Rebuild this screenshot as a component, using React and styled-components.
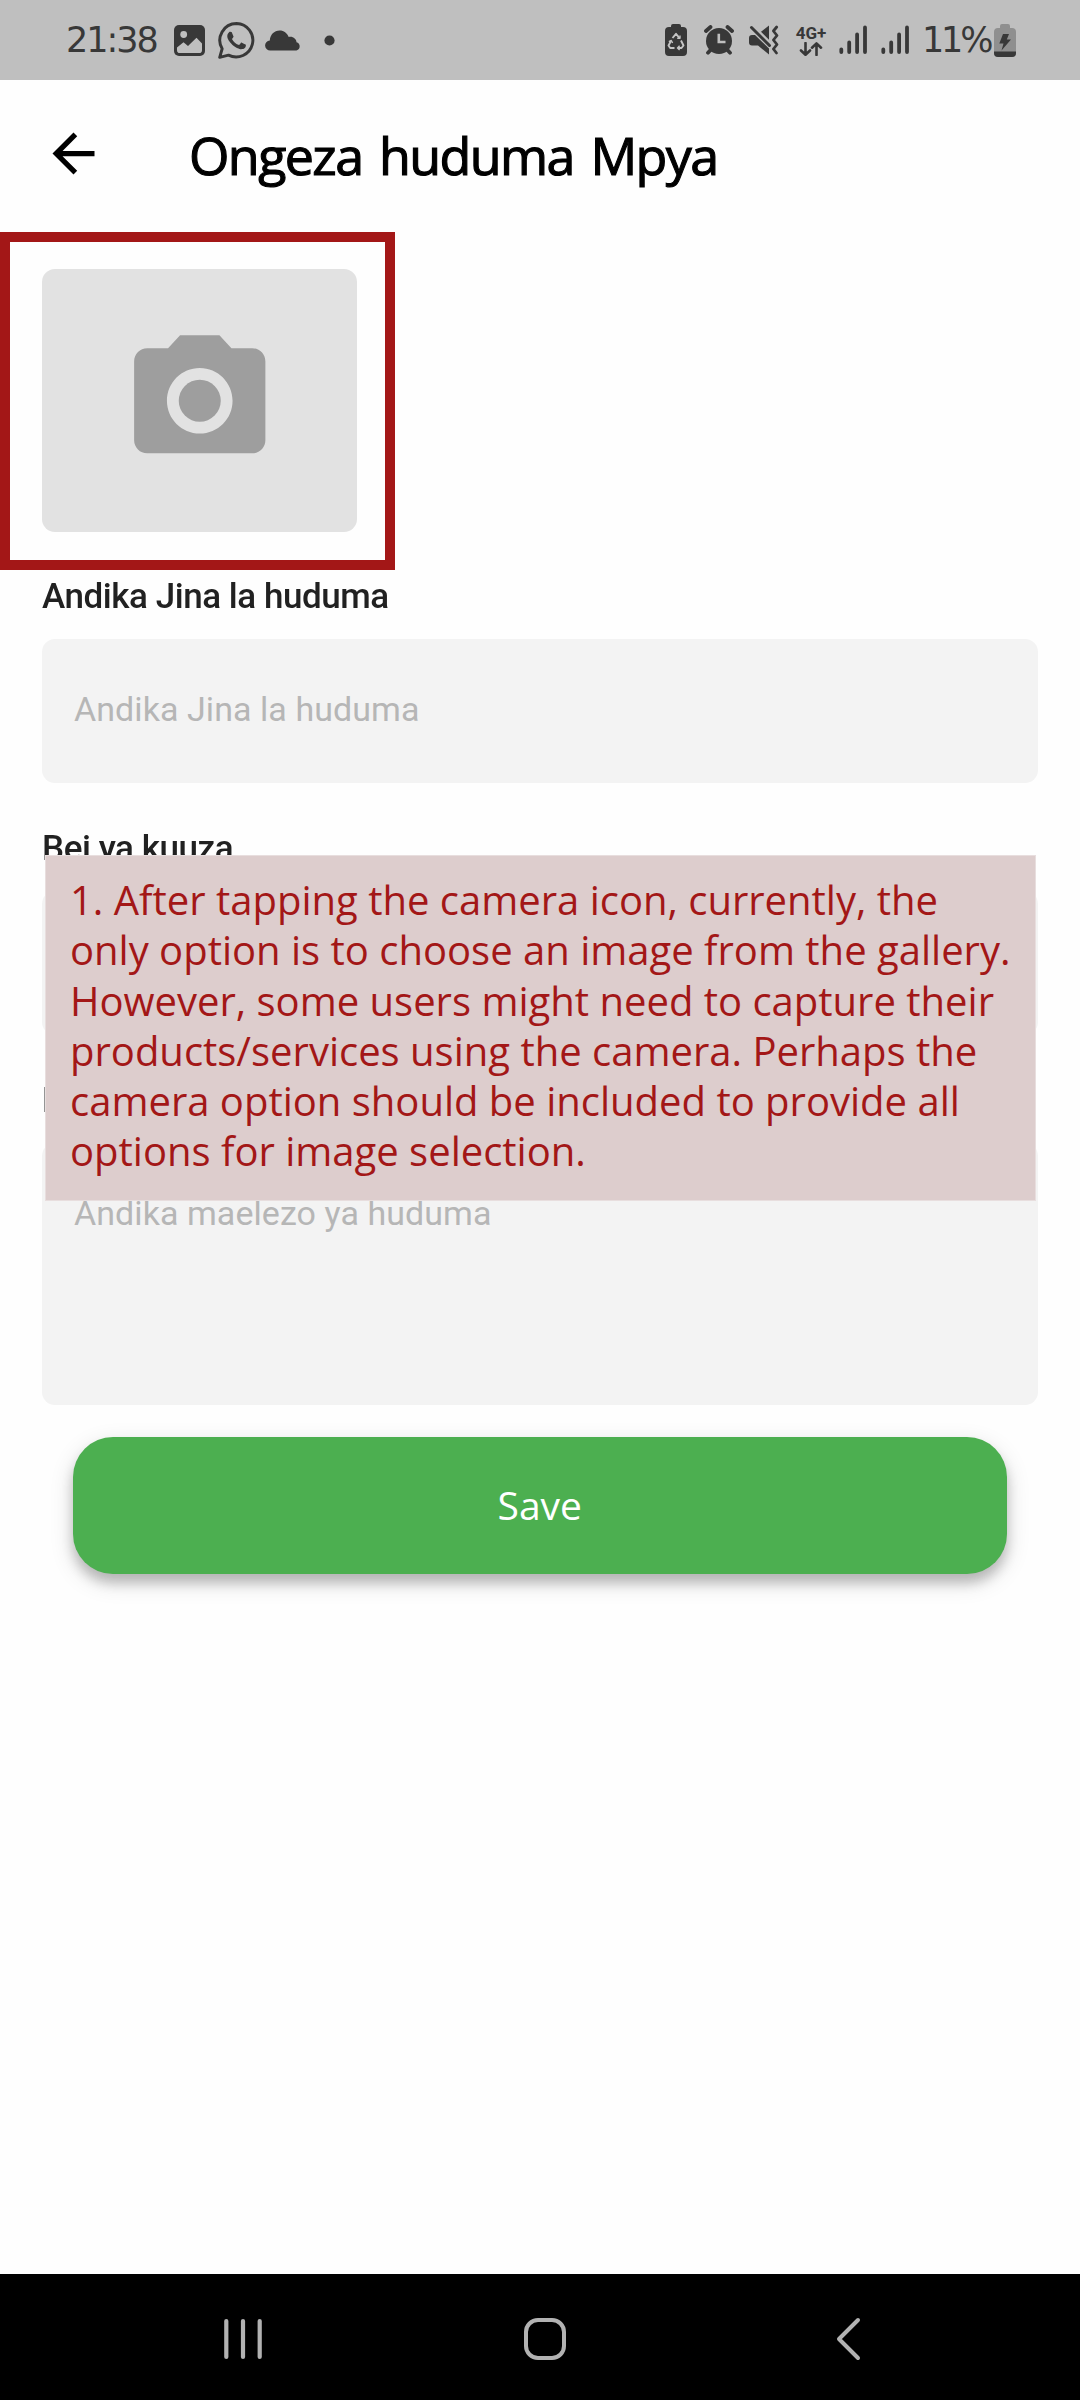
import React from "react";
import styled, { createGlobalStyle } from "styled-components";

const INK = "#383838";
const RED = "#a31717";

const GlobalStyle = createGlobalStyle`
  *, *::before, *::after { box-sizing: border-box; }
  html, body { margin: 0; padding: 0; background: #fefefe; }
  svg { display: block; flex: none; }
`;

const Screen = styled.div`
  position: relative;
  display: flex;
  flex-direction: column;
  width: 1080px;
  height: 2400px;
  overflow: hidden;
  background: #fefefe;
  font-family: Roboto, "Noto Sans", sans-serif;
`;

const StatusBar = styled.header`
  display: flex;
  justify-content: space-between;
  align-items: center;
  flex: none;
  height: 80px;
  padding: 0 64px 0 66px;
  background: #bfbfbf;
  color: ${INK};
`;

const StatusGroup = styled.div`
  display: flex;
  align-items: center;
  height: 80px;
`;

const StatusText = styled.span`
  display: block;
  width: ${(p) => p.$width}px;
  margin-right: ${(p) => p.$after}px;
  font-family: "DejaVu Sans", sans-serif;
  font-size: 35px;
  line-height: 80px;
  letter-spacing: ${(p) => p.$track}px;
  white-space: nowrap;
`;

const StatusIcon = styled.svg`
  margin-right: ${(p) => p.$after || 0}px;
`;

const Network = styled.div`
  display: flex;
  flex-direction: column;
  align-items: center;
  width: 32px;
  margin-right: 12px;
  font: 700 17px/17px Roboto, sans-serif;
  white-space: nowrap;
`;

const AppBar = styled.div`
  display: flex;
  align-items: center;
  flex: none;
  height: 147px;
  padding-left: 42px;
`;

const Title = styled.h1`
  margin: 0 0 0 84px;
  padding-top: 3px;
  font: 500 52px/70px "Open Sans", sans-serif;
  letter-spacing: -1.6px;
  word-spacing: 4.6px;
  color: #000;
  -webkit-text-stroke: 1.1px #000;
  white-space: nowrap;
`;

const Form = styled.main`
  display: flex;
  flex-direction: column;
  flex: 1;
  padding: 42px 42px 0;
`;

const PhotoSlot = styled.div`
  height: 262px;
`;

const PhotoButton = styled.div`
  display: flex;
  align-items: center;
  justify-content: center;
  width: 315px;
  height: 262.6px;
  border-radius: 13px;
  background: #e2e2e2;
`;

const Field = styled.div`
  display: flex;
  flex-direction: column;
  gap: 20px;
  padding-top: 42px;
`;

const Label = styled.div`
  font-size: 35px;
  font-weight: 500;
  line-height: 46px;
  letter-spacing: -0.45px;
  padding-top: 1px;
  margin-bottom: -1px;
  color: #212121;
  white-space: nowrap;
  will-change: opacity;
`;

const Input = styled.div`
  height: ${(p) => p.$height}px;
  padding: ${(p) => p.$padTop}px 32px 0;
  border-radius: 13px;
  background: #f3f3f3;
  font-size: 34px;
  line-height: 44px;
  letter-spacing: 0.06px;
  color: #b6b6b6;
  white-space: nowrap;
`;

const SaveButton = styled.div`
  display: flex;
  align-items: center;
  justify-content: center;
  height: 136.6px;
  margin: 32px 31.5px 0 31px;
  border-radius: 40px;
  background: #4caf50;
  box-shadow: 0 9px 12px rgba(0, 0, 0, 0.2), 0 8px 24px rgba(0, 0, 0, 0.14);
  color: #fff;
  font: 400 39px/50px "Open Sans", sans-serif;
`;

const Highlight = styled.div`
  position: absolute;
  left: 0;
  top: 232px;
  width: 395px;
  height: 338px;
  border: 10px solid ${RED};
`;

const Note = styled.div`
  position: absolute;
  left: 45px;
  top: 855px;
  width: 991px;
  height: 346px;
  padding: 19px 0 0 24px;
  border: 1px solid #e8dede;
  background: #ddcdcd;
  color: ${RED};
  font: 400 40px/50.25px "Open Sans", sans-serif;
`;

const NoteLine = styled.div`
  white-space: nowrap;
`;

const NavBar = styled.footer`
  display: flex;
  align-items: center;
  flex: none;
  height: 126px;
  padding: 4px 218px 0 222px;
  justify-content: space-between;
  background: #000;
`;

const HomeIcon = styled.svg`
  margin-right: 8px;
`;

const Signal = ({ after }) => (
  <StatusIcon width="28" height="30" $after={after} stroke={INK} strokeWidth="3.8" strokeLinecap="round">
    <path d="M2.3 24.5V27M10.2 17.5V27M18.1 9.5V27M26 2.5V27" />
  </StatusIcon>
);

const noteLines = [
  "1. After tapping the camera icon, currently, the",
  "only option is to choose an image from the gallery.",
  "However, some users might need to capture their",
  "products/services using the camera. Perhaps the",
  "camera option should be included to provide all",
  "options for image selection.",
];

export default function App() {
  return (
    <Screen>
      <GlobalStyle />
      <StatusBar>
        <StatusGroup>
          <StatusText $width={92} $after={16} $track={-2}>21:38</StatusText>
          <StatusIcon width="31" height="31" $after={13} viewBox="0 0 31 31">
            <rect width="31" height="31" rx="5" fill={INK} />
            <circle cx="9.7" cy="9.5" r="3.4" fill="#bfbfbf" />
            <path d="M3 22.5L9.5 17.3L14 21L22.5 12.7L28 18.5V25.2Q28 28 25.2 28H5.8Q3 28 3 25.2Z" fill="#bfbfbf" />
          </StatusIcon>
          <StatusIcon width="37" height="37" $after={10} viewBox="0 0 24 24" fill={INK}>
            <path d="M17.472 14.382c-.297-.149-1.758-.867-2.03-.967-.273-.099-.471-.148-.67.15-.197.297-.767.966-.94 1.164-.173.199-.347.223-.644.075-.297-.15-1.255-.463-2.39-1.475-.883-.788-1.48-1.761-1.653-2.059-.173-.297-.018-.458.13-.606.134-.133.298-.347.446-.52.149-.174.198-.298.298-.497.099-.198.05-.371-.025-.52-.075-.149-.669-1.612-.916-2.207-.242-.579-.487-.5-.669-.51-.173-.008-.371-.01-.57-.01-.198 0-.52.074-.792.372-.272.297-1.04 1.016-1.04 2.479 0 1.462 1.065 2.875 1.213 3.074.149.198 2.096 3.2 5.077 4.487.709.306 1.262.489 1.694.625.712.227 1.36.195 1.871.118.571-.085 1.758-.719 2.006-1.413.248-.694.248-1.289.173-1.413-.074-.124-.272-.198-.57-.347" />
            <path d="M12.05 1A10.85 10.85 0 0 0 2.7 17.35L1.1 22.9L6.8 21.5A10.85 10.85 0 1 0 12.05 1Z" fill="none" stroke={INK} strokeWidth="1.9" strokeLinejoin="round" />
          </StatusIcon>
          <StatusIcon width="36" height="21" $after={23} viewBox="0 0 36 21" fill={INK}>
            <path d="M5.5 20.5A5 5 0 0 1 4.8 10.4C5.2 4.8 9.1.5 14.7.5C18.9.5 22 3 23.7 7C28 6.1 31.3 9 31.5 12.2A4.3 4.3 0 0 1 31.5 20.5Z" />
          </StatusIcon>
          <StatusIcon width="11" height="11" viewBox="0 0 11 11" fill={INK}>
            <circle cx="5.5" cy="5.5" r="5.1" />
          </StatusIcon>
        </StatusGroup>
        <StatusGroup>
          <StatusIcon width="22" height="32" $after={17} viewBox="0 0 22 32">
            <path d="M6 4V2Q6 0 8 0H14Q16 0 16 2V3H18Q22 3 22 7V28Q22 32 18 32H4Q0 32 0 28V7Q0 3 4 3H6Z" fill={INK} />
            <g fill="none" stroke="#c4c4c4" strokeWidth="1.9" strokeLinejoin="round">
              <path d="M7.5 14L11 9.8L14.5 14M16 16.5L18.5 21.5L16.5 24H13M9.5 24H5.2L3.5 21.5L6 17" />
              <path d="M12.2 14.3H15V11.6M14.6 21.8L12.5 24L14.6 26M3.8 17.6L6.3 16.5L7.6 19" strokeWidth="1.4" />
            </g>
          </StatusIcon>
          <StatusIcon width="30" height="30" $after={15} viewBox="0 0 30 30">
            <g stroke={INK} strokeWidth="3.8" strokeLinecap="round">
              <path d="M2 6L6.5 2M28 6L23.5 2M4 27.7L7 24.5M26 27.7L23 24.5" />
            </g>
            <circle cx="15" cy="16" r="13" fill={INK} />
            <path d="M14.8 8.8V17H21.5" fill="none" stroke="#bfbfbf" strokeWidth="2.6" />
          </StatusIcon>
          <StatusIcon width="30" height="30" $after={16} viewBox="0 0 30 30">
            <path d="M0 13Q0 10 3 10H6L20 23.5V29.5L9 20.5H3Q0 20.5 0 17.5ZM12 6.8L20 .5V14.8Z" fill={INK} />
            <path d="M2.5 2.5L20.5 20.5" stroke={INK} strokeWidth="3" strokeLinecap="round" />
            <path d="M27.7 2L24.4 6L28 10.5L24.4 15L28 19.5L24.4 24L27.5 28" fill="none" stroke={INK} strokeWidth="2.8" strokeLinecap="round" strokeLinejoin="round" />
          </StatusIcon>
          <Network>
            4G+
            <svg width="24" height="14" viewBox="0 0 24 14" fill="none" stroke={INK} strokeWidth="2.6" strokeLinecap="round" strokeLinejoin="round">
              <path d="M6.5 1V12.5M2 8.5L6.5 12.7L11 8.5M17.5 13V1.5M13 5.7L17.5 1.4L22 5.7" />
            </svg>
          </Network>
          <Signal after={14} />
          <Signal after={13} />
          <StatusText $width={69} $after={3} $track={-3.2}>11%</StatusText>
          <StatusIcon width="22" height="33" viewBox="0 0 22 33">
            <path d="M6 5V2Q6 0 8 0H14Q16 0 16 2V4H18Q22 4 22 8V29Q22 33 18 33H4Q0 33 0 29V8Q0 4 4 4H6Z" fill="#8f8f8f" />
            <path d="M0 27.5H22V29Q22 33 18 33H4Q0 33 0 29Z" fill={INK} />
            <path d="M9 10H15L12.8 15.5H17L7.5 26.5L9.5 19.5H5.3Z" fill={INK} />
          </StatusIcon>
        </StatusGroup>
      </StatusBar>

      <AppBar>
        <svg width="63" height="63" viewBox="0 0 24 24" fill="#000">
          <path d="M20 11H7.83l5.59-5.59L12 4l-8 8 8 8 1.41-1.41L7.83 13H20v-2z" />
        </svg>
        <Title>Ongeza huduma Mpya</Title>
      </AppBar>

      <Form>
        <PhotoSlot>
          <PhotoButton>
            <svg width="157.5" height="157.5" viewBox="0 0 24 24" fill="#9e9e9e">
              <circle cx="12" cy="12" r="3.2" />
              <path d="M9 2L7.17 4H4c-1.1 0-2 .9-2 2v12c0 1.1.9 2 2 2h16c1.1 0 2-.9 2-2V6c0-1.1-.9-2-2-2h-3.17L15 2H9zm3 15c-2.76 0-5-2.24-5-5s2.24-5 5-5 5 2.24 5 5-2.24 5-5 5z" />
            </svg>
          </PhotoButton>
        </PhotoSlot>
        <Field>
          <Label>Andika Jina la huduma</Label>
          <Input $height={144} $padTop={48}>Andika Jina la huduma</Input>
        </Field>
        <Field>
          <Label>Bei ya kuuza</Label>
          <Input $height={144} $padTop={48} />
        </Field>
        <Field>
          <Label>Maelezo</Label>
          <Input $height={262} $padTop={48}>Andika maelezo ya huduma</Input>
        </Field>
        <SaveButton>Save</SaveButton>
      </Form>

      <NavBar>
        <svg width="42" height="44" stroke="#b2b2b2" strokeWidth="4.2" strokeLinecap="round">
          <path d="M4.3 4V40M21 4V40M37.7 4V40" />
        </svg>
        <HomeIcon width="46" height="46" fill="none" stroke="#b2b2b2" strokeWidth="4">
          <rect x="4" y="4" width="38" height="38" rx="12" />
        </HomeIcon>
        <svg width="28" height="46" fill="none" stroke="#b2b2b2" strokeWidth="4" strokeLinecap="round" strokeLinejoin="round">
          <path d="M24 4L5 23L24 42" />
        </svg>
      </NavBar>

      <Highlight />
      <Note>
        {noteLines.map((line) => (
          <NoteLine key={line}>{line}</NoteLine>
        ))}
      </Note>
    </Screen>
  );
}
